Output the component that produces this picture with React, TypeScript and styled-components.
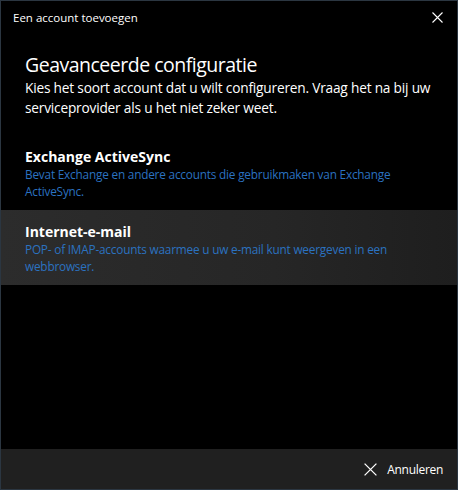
import styled, { createGlobalStyle } from "styled-components";
import { FC } from "react";

const GlobalStyle = createGlobalStyle`
  html, body {
    margin: 0;
    padding: 0;
    background: #000000;
  }
  body {
    font-family: "Open Sans", "Noto Sans", sans-serif;
  }
`;

const WindowStyles = styled.div`
  width: 458px;
  height: 490px;
  box-sizing: border-box;
  border: 1px solid #2b3641;
  background: #000000;
  color: #ffffff;
  display: flex;
  flex-direction: column;
`;

const TitleBarStyles = styled.div`
  height: 32px;
  display: flex;
  align-items: center;
  justify-content: space-between;
  padding: 0px 14px 0px 12px;
  font-size: 11.5px;
`;

const CloseIconStyles = styled.svg`
  stroke: #ffffff;
  stroke-width: 1.1;
`;

const BodyStyles = styled.div`
  flex: 1;
  display: flex;
  flex-direction: column;
  padding-top: 19px;
`;

const HeaderStyles = styled.div`
  padding: 0px 24px;
`;

const HeadingStyles = styled.h1`
  margin: 0px;
  font-size: 19.5px;
  font-weight: 400;
  letter-spacing: -0.5px;
  line-height: 26px;
`;

const DescriptionStyles = styled.p`
  margin: 0px;
  font-size: 13.7px;
  letter-spacing: -0.2px;
  line-height: 20px;
`;

const OptionListStyles = styled.div`
  margin-top: 17px;
  display: flex;
  flex-direction: column;
`;

const OptionStyles = styled.div<{ $selected?: boolean }>`
  padding: 13px 24px 10px;
  background: ${({ $selected }) =>
    $selected
      ? "linear-gradient(90deg, #2c2c2c 0%, #262626 60%, #1e1e1e 100%)"
      : "transparent"};
`;

const OptionTitleStyles = styled.div`
  font-size: 14px;
  font-weight: 700;
  line-height: 18px;
`;

const OptionTextStyles = styled.div`
  font-size: 11.8px;
  letter-spacing: -0.2px;
  line-height: 17px;
  color: #2b72c0;
`;

const FooterStyles = styled.div`
  height: 40px;
  background: #202020;
  display: flex;
  align-items: center;
  justify-content: flex-end;
  padding-right: 14px;
`;

const CancelButtonStyles = styled.button`
  display: flex;
  align-items: center;
  gap: 10px;
  border: none;
  background: transparent;
  color: #ffffff;
  font-family: inherit;
  font-size: 12px;
  letter-spacing: -0.3px;
  padding: 0px;
`;

const CrossIcon: FC<{ size: number }> = ({ size }) => (
  <CloseIconStyles
    viewBox="0 0 11 11"
    style={{ width: size, height: size }}
    fill="none"
  >
    <path d="M0.5 0.5 L10.5 10.5 M10.5 0.5 L0.5 10.5" />
  </CloseIconStyles>
);

const OPTIONS = [
  {
    title: "Exchange ActiveSync",
    text: "Bevat Exchange en andere accounts die gebruikmaken van Exchange ActiveSync.",
  },
  {
    title: "Internet-e-mail",
    text: "POP- of IMAP-accounts waarmee u uw e-mail kunt weergeven in een webbrowser.",
    selected: true,
  },
];

const App: FC = () => (
  <>
    <GlobalStyle />
    <WindowStyles>
      <TitleBarStyles>
        <span>Een account toevoegen</span>
        <CrossIcon size={11} />
      </TitleBarStyles>
      <BodyStyles>
        <HeaderStyles>
          <HeadingStyles>Geavanceerde configuratie</HeadingStyles>
          <DescriptionStyles>
            Kies het soort account dat u wilt configureren. Vraag het na bij uw
            serviceprovider als u het niet zeker weet.
          </DescriptionStyles>
        </HeaderStyles>
        <OptionListStyles>
          {OPTIONS.map((option) => (
            <OptionStyles key={option.title} $selected={option.selected}>
              <OptionTitleStyles>{option.title}</OptionTitleStyles>
              <OptionTextStyles>{option.text}</OptionTextStyles>
            </OptionStyles>
          ))}
        </OptionListStyles>
      </BodyStyles>
      <FooterStyles>
        <CancelButtonStyles>
          <CrossIcon size={13} />
          Annuleren
        </CancelButtonStyles>
      </FooterStyles>
    </WindowStyles>
  </>
);

export default App;
